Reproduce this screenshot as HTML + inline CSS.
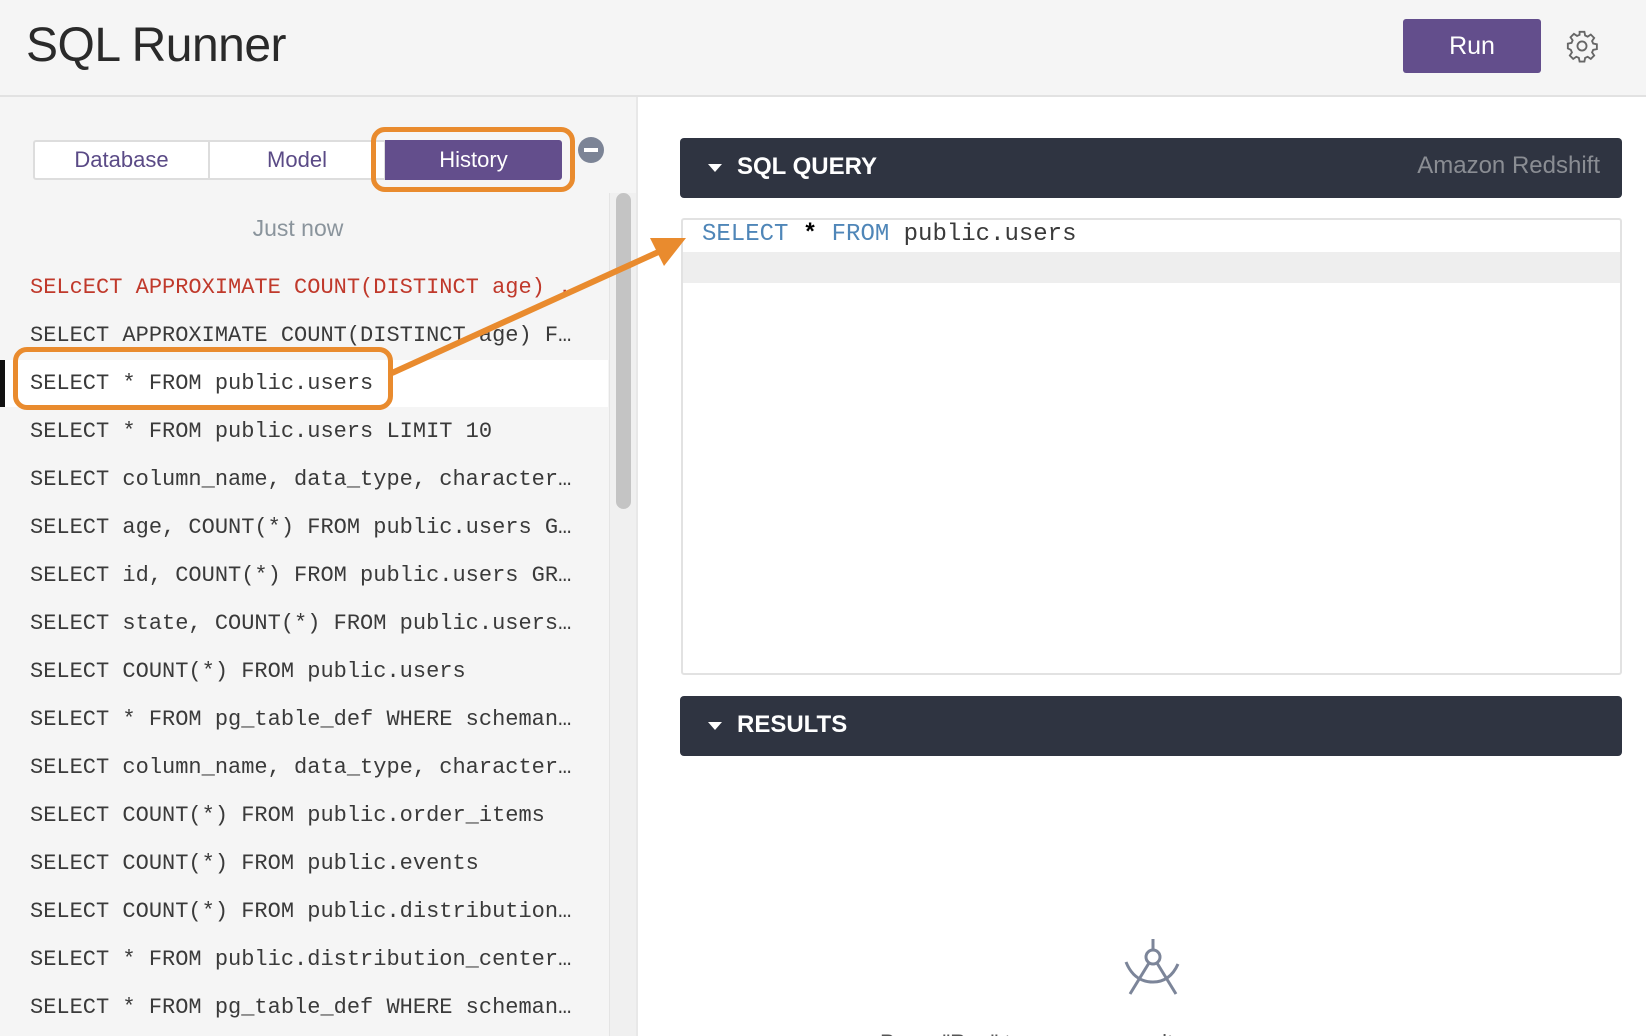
<!DOCTYPE html>
<html style="height:1036px;overflow:hidden"><head><meta charset="utf-8"><style>
*{margin:0;padding:0;box-sizing:border-box}
body{width:1646px;height:1036px;overflow:hidden;background:#fff;font-family:"Liberation Sans",sans-serif;position:relative}
.abs{position:absolute}
#hdr{left:0;top:0;width:1646px;height:97px;background:#f5f5f5;border-bottom:2px solid #e2e2e2}
#title{left:26px;top:18px;font-size:48px;color:#2a2a2a;letter-spacing:-0.5px}
#run{left:1403px;top:19px;width:138px;height:54px;background:#634e8c;border-radius:3px;color:#fff;font-size:25px;text-align:center;line-height:54px}
#side{left:0;top:97px;width:638px;height:939px;background:#f5f5f5;border-right:2px solid #e8e8e8}
.tab{top:140px;height:40px;border:2px solid #ddd;background:#fff;color:#5a4a86;font-size:22px;text-align:center;line-height:36px}
.row{left:30px;font-family:"Liberation Mono",monospace;font-size:22px;color:#3a3a3a;white-space:nowrap;line-height:30px}
.bar{left:680px;width:942px;height:60px;background:#2f3441;border-radius:4px;color:#fff}
.bar b{position:absolute;left:57px;top:15px;font-size:24px}
.tri{position:absolute;left:28px;top:26px;width:0;height:0;border-left:7px solid transparent;border-right:7px solid transparent;border-top:8px solid #fff}
</style></head><body>
<div id="hdr" class="abs"></div>
<div id="title" class="abs">SQL Runner</div>
<div id="run" class="abs">Run</div>
<svg class="abs" style="left:1565px;top:29px" width="34" height="34" viewBox="0 0 24 24" fill="none" stroke="#666" stroke-width="1.3"><circle cx="12" cy="12" r="3.2"/><path d="M10.3 2h3.4l.5 2.6 1.8.8 2.2-1.5 2.4 2.4-1.5 2.2.8 1.8 2.6.5v3.4l-2.6.5-.8 1.8 1.5 2.2-2.4 2.4-2.2-1.5-1.8.8-.5 2.6h-3.4l-.5-2.6-1.8-.8-2.2 1.5-2.4-2.4 1.5-2.2-.8-1.8L2 13.7v-3.4l2.6-.5.8-1.8-1.5-2.2 2.4-2.4 2.2 1.5 1.8-.8z"/></svg>

<div id="side" class="abs"></div>
<div class="abs tab" style="left:33px;width:177px;border-radius:3px 0 0 3px">Database</div>
<div class="abs tab" style="left:208px;width:178px">Model</div>
<div class="abs tab" style="left:385px;width:177px;background:#634e8c;border-color:#634e8c;color:#fff;border-radius:0 3px 3px 0">History</div>
<div class="abs" style="left:371px;top:127px;width:204px;height:65px;border:5px solid #e98b2e;border-radius:14px"></div>
<div class="abs" style="left:578px;top:137px;width:26px;height:26px;border-radius:50%;background:#7c8496"><div style="position:absolute;left:6px;top:11px;width:14px;height:4px;background:#fff"></div></div>
<div class="abs" style="left:609px;top:193px;width:27px;height:843px;background:#f0f0f0;border-left:1px solid #e4e4e4"></div>
<div class="abs" style="left:616px;top:193px;width:15px;height:316px;background:#c4c4c4;border-radius:8px"></div>
<div class="abs" style="left:0;top:215px;width:596px;text-align:center;font-size:23px;color:#8a949c">Just now</div>

<div class="abs" style="left:0;top:360px;width:608px;height:47px;background:#fff"></div>
<div class="abs" style="left:0;top:360px;width:5px;height:47px;background:#111"></div>

<div class="row abs" style="top:273px;color:#c0392b">SELcECT APPROXIMATE COUNT(DISTINCT age) .</div>
<div class="row abs" style="top:321px">SELECT APPROXIMATE COUNT(DISTINCT age) F…</div>
<div class="row abs" style="top:369px">SELECT * FROM public.users</div>
<div class="row abs" style="top:417px">SELECT * FROM public.users LIMIT 10</div>
<div class="row abs" style="top:465px">SELECT column_name, data_type, character…</div>
<div class="row abs" style="top:513px">SELECT age, COUNT(*) FROM public.users G…</div>
<div class="row abs" style="top:561px">SELECT id, COUNT(*) FROM public.users GR…</div>
<div class="row abs" style="top:609px">SELECT state, COUNT(*) FROM public.users…</div>
<div class="row abs" style="top:657px">SELECT COUNT(*) FROM public.users</div>
<div class="row abs" style="top:705px">SELECT * FROM pg_table_def WHERE scheman…</div>
<div class="row abs" style="top:753px">SELECT column_name, data_type, character…</div>
<div class="row abs" style="top:801px">SELECT COUNT(*) FROM public.order_items</div>
<div class="row abs" style="top:849px">SELECT COUNT(*) FROM public.events</div>
<div class="row abs" style="top:897px">SELECT COUNT(*) FROM public.distribution…</div>
<div class="row abs" style="top:945px">SELECT * FROM public.distribution_center…</div>
<div class="row abs" style="top:993px">SELECT * FROM pg_table_def WHERE scheman…</div>

<div class="abs" style="left:13px;top:347px;width:380px;height:63px;border:5px solid #e98b2e;border-radius:14px"></div>

<div class="bar abs" style="top:138px"><div class="tri"></div><b>SQL QUERY</b><span style="position:absolute;right:22px;top:14px;font-size:24px;color:#8a8d93">Amazon Redshift</span></div>
<div class="abs" style="left:681px;top:218px;width:941px;height:457px;border:2px solid #e2e2e2;border-radius:3px;background:#fff"></div>
<div class="abs" style="left:683px;top:252px;width:937px;height:31px;background:#eeeeee"></div>
<div class="abs" style="left:702px;top:219px;font-family:'Liberation Mono',monospace;font-size:24px;line-height:32px;color:#3a3a3a;white-space:pre"><span style="color:#4f86b8">SELECT</span> <b style="color:#000">*</b> <span style="color:#4f86b8">FROM</span> public.users</div>

<div class="bar abs" style="top:696px"><div class="tri"></div><b>RESULTS</b></div>

<svg class="abs" style="left:0;top:0;pointer-events:none" width="1646" height="1036"><line x1="392" y1="373" x2="665" y2="249" stroke="#e98b2e" stroke-width="6"/><polygon points="686,238 650,238 664,266" fill="#e98b2e"/></svg>

<svg class="abs" style="left:1120px;top:935px" width="66" height="66" viewBox="1120 935 66 66" fill="none" stroke="#7c8599" stroke-width="3"><line x1="1153" y1="939" x2="1153" y2="950"/><circle cx="1153" cy="957" r="7"/><line x1="1149" y1="963" x2="1130" y2="994"/><line x1="1157" y1="963" x2="1176" y2="994"/><path d="M1126 962 Q1134 982 1153 982 Q1170 982 1178 964"/></svg>
<div class="abs" style="left:0;top:1030px;width:1646px;height:6px;overflow:hidden"><div style="position:absolute;left:880px;top:0;font-size:22px;color:#555">Press "Run" to see your results.</div></div>
</body></html>
